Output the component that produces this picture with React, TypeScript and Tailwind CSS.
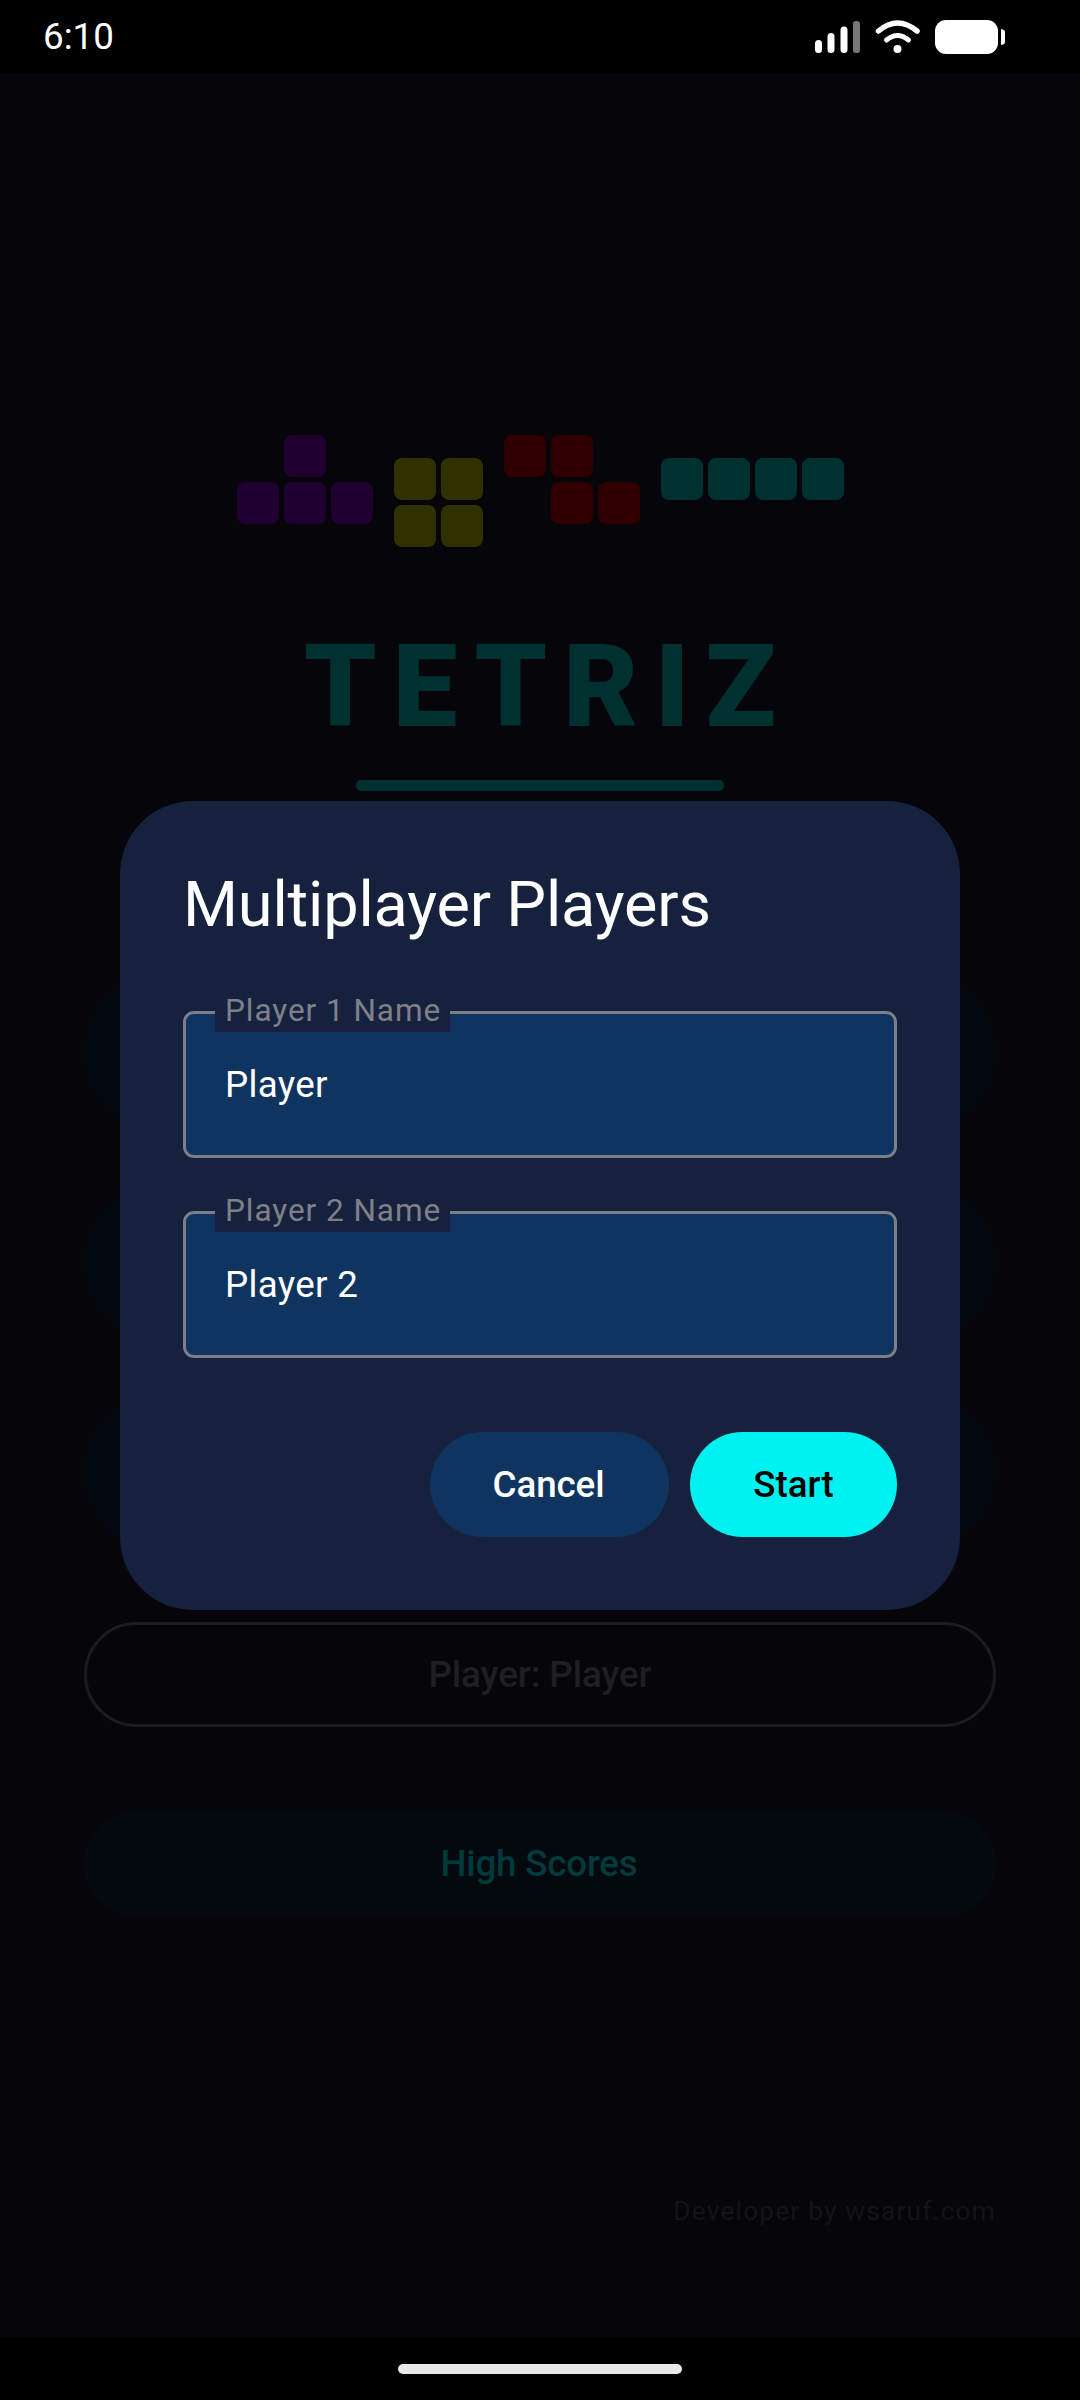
import React from "react";

const Cell = ({ c, off }: { c: string; off?: boolean }) => (
  <div className={off ? "w-[42px] h-[42px]" : `w-[42px] h-[42px] rounded-[8px] ${c}`} />
);

const Piece = ({ rows, c, cls }: { rows: number[][]; c: string; cls?: string }) => (
  <div className={`flex flex-col gap-[5px] ${cls ?? ""}`}>
    {rows.map((r, i) => (
      <div key={i} className="flex gap-[5px]">
        {r.map((v, j) => (
          <Cell key={j} c={c} off={!v} />
        ))}
      </div>
    ))}
  </div>
);

const Field = ({ label, value }: { label: string; value: string }) => (
  <div className="relative box-border h-[147px] border-[3px] border-[#7d7f87] rounded-[11px] bg-[#0f3460] flex items-center pl-[39px]">
    <div className="absolute left-[29px] top-[-22px] h-[40px] bg-[#16213e] pl-[10px] pr-[9px] text-[31.5px] leading-[38px] tracking-[0.95px] text-[#7f8087] whitespace-nowrap">
      {label}
    </div>
    <div className="text-[36.75px] leading-[56px] tracking-[0.3px] text-white">{value}</div>
  </div>
);

export default function App() {
  return (
    <div className="relative w-[1080px] h-[2400px] overflow-hidden bg-[#05050a] font-['Roboto',sans-serif] flex flex-col">
      <div className="h-[74px] bg-black flex items-start shrink-0">
        <div className="pl-[43px] pt-[15px] text-[36.75px] leading-[44px] text-white">6:10</div>
        <svg className="ml-auto mr-[75px] mt-[20px]" width="190" height="34" viewBox="0 0 190 34">
          <rect x="0" y="20" width="7" height="13" rx="3.5" fill="#fff" />
          <rect x="12.5" y="13" width="7" height="20" rx="3.5" fill="#fff" />
          <rect x="25.5" y="6.5" width="7" height="26.5" rx="3.5" fill="#fff" />
          <rect x="38" y="1" width="7" height="32" rx="3" fill="#777" />
          <g transform="translate(60 0)" fill="none" stroke="#fff" strokeLinecap="round">
            <path d="M3.5 11 Q22.5 -5 42 11" strokeWidth="5.5" />
            <path d="M11.5 20 Q22.5 11 33.5 20" strokeWidth="5" />
            <circle cx="22.5" cy="29" r="4" fill="#fff" stroke="none" />
          </g>
          <rect x="120" y="0" width="63" height="34" rx="11" fill="#fff" />
          <path d="M186 9 L188 9.5 Q190 10 190 12 L190 22 Q190 24 188 24.5 L186 25 Z" fill="#fff" />
        </svg>
      </div>

      <div className="flex-1 flex flex-col px-[84px] pt-[361px] items-stretch">
        <div className="flex justify-center gap-[21px] h-[112px]">
          <Piece c="bg-[#200030]" rows={[[0, 1, 0], [1, 1, 1]]} />
          <Piece c="bg-[#303000]" cls="mt-[23px]" rows={[[1, 1], [1, 1]]} />
          <Piece c="bg-[#300000]" rows={[[1, 1, 0], [0, 1, 1]]} />
          <Piece c="bg-[#003030]" cls="mt-[23px]" rows={[[1, 1, 1, 1]]} />
        </div>
        <div className="mt-[72px] h-[136px] text-center text-[115.5px] leading-[136px] font-black tracking-[16px] text-[#003030] pl-[16px]">
          TETRIZ
        </div>
        <div className="mt-[25px] self-center w-[368px] h-[11px] rounded-[5px] bg-[#003030]" />
        <div className="mt-[182px] flex flex-col gap-[53px]">
          <div className="h-[157px] rounded-full bg-[#01090f]" />
          <div className="h-[157px] rounded-full bg-[#01090f]" />
          <div className="h-[157px] rounded-full bg-[#01090f]" />
        </div>
        <div className="mt-[72px] h-[105px] box-border rounded-full border-[3px] border-[#1c1c1f] flex items-center justify-center text-[36.75px] font-medium tracking-[-0.1px] text-[#1f1f22]">
          Player: Player
        </div>
        <div className="mt-[83px] h-[106px] rounded-full bg-[#03090d] flex items-center justify-center pr-[2px] pt-[1px] text-[36.75px] font-medium tracking-[-0.2px] text-[#003a3c]">
          High Scores
        </div>
        <div className="mt-[276px] text-right text-[26.25px] leading-[38px] tracking-[1.2px] text-[#141418]">
          Developer by wsaruf.com
        </div>
      </div>

      <div className="h-[63px] bg-black shrink-0 flex justify-center pt-[27px]">
        <div className="w-[284px] h-[10px] rounded-full bg-[#e8e8e8]" />
      </div>

      <div className="absolute left-[120px] top-[801px] w-[840px] h-[809px] rounded-[73px] bg-[#16213e] px-[63px] pt-[62px] flex flex-col">
        <div className="text-[63px] leading-[84px] tracking-[-0.16px] text-white">Multiplayer Players</div>
        <div className="mt-[64px] flex flex-col gap-[53px]">
          <Field label="Player 1 Name" value="Player" />
          <Field label="Player 2 Name" value="Player 2" />
        </div>
        <div className="mt-[74px] flex justify-end gap-[21px]">
          <div className="w-[239px] h-[105px] rounded-full bg-[#0f3460] flex items-center justify-center pr-[2px] text-[36.75px] font-medium tracking-[-0.1px] text-white">
            Cancel
          </div>
          <div className="w-[207px] h-[105px] rounded-full bg-[#00f2f0] flex items-center justify-center text-[36.75px] font-medium text-black">
            Start
          </div>
        </div>
      </div>
    </div>
  );
}
